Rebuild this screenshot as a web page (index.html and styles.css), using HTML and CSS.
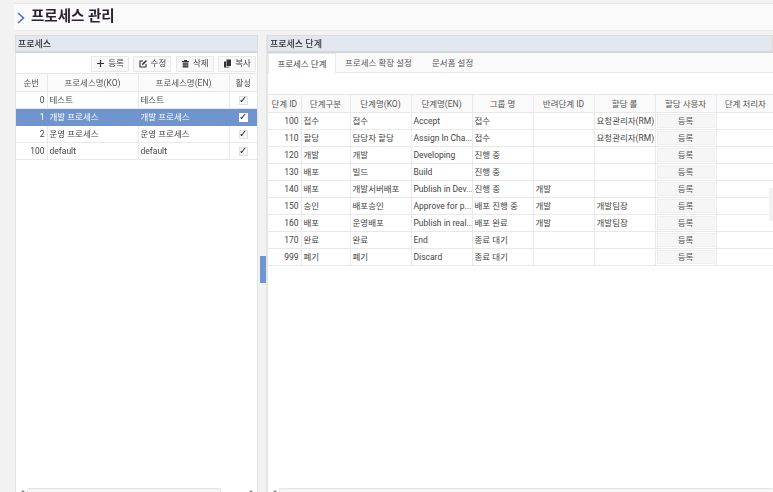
FILE: index.html
```html
<!DOCTYPE html>
<html lang="ko">
<head>
<meta charset="utf-8">
<title>프로세스 관리</title>
<link rel="stylesheet" href="styles.css">
</head>
<body>
<div class="page">
  <header class="title-bar">
    <svg class="chevron" width="8" height="12" viewBox="0 0 8 12"><path d="M1 1l5.500 5L1 11" fill="none" stroke="#4f63d8" stroke-width="1.500"/></svg>
    <h1>프로세스 관리</h1>
  </header>
  <main class="content">
    <section class="panel left">
      <div class="panel-head">프로세스</div>
      <div class="panel-body">
        <div class="toolbar">
          <button class="tool"><svg width="9" height="9" viewBox="0 0 9 9"><path d="M4.500 1v7M1 4.500h7" stroke="#333" stroke-width="1.200"/></svg>등록</button>
          <button class="tool"><svg width="9" height="9" viewBox="0 0 9 9"><path d="M7 5v3H1V2h3" fill="none" stroke="#333" stroke-width="1.100"/><path d="M3 6l.3-1.600L7 1l1 1-3.600 3.700z" fill="#333"/></svg>수정</button>
          <button class="tool"><svg width="9" height="9" viewBox="0 0 9 9"><path d="M1 2h7v1H1zM3 1h3v1H3zM1.700 3.500h5.600V8.500H1.700z" fill="#333"/><path d="M1.700 5h5.600M1.700 6.700h5.600" stroke="#ddd" stroke-width=".5"/></svg>삭제</button>
          <button class="tool"><svg width="9" height="9" viewBox="0 0 9 9"><path d="M3.500 .5H8v6.500H3.500z" fill="#333"/><path d="M1 2.500h2v5.200h3.500v.8H1z" fill="#333"/></svg>복사</button>
        </div>
        <table class="grid grid-left">
          <colgroup><col class="c-no"><col class="c-name"><col class="c-name"><col class="c-on"></colgroup>
          <thead><tr><th>순번</th><th>프로세스명(KO)</th><th>프로세스명(EN)</th><th>활성</th></tr></thead>
          <tbody>
            <tr><td class="num">0</td><td>테스트</td><td>테스트</td><td class="chk"><span class="box">✓</span></td></tr>
            <tr class="selected"><td class="num">1</td><td>개발 프로세스</td><td>개발 프로세스</td><td class="chk"><span class="box">✓</span></td></tr>
            <tr><td class="num">2</td><td>운영 프로세스</td><td>운영 프로세스</td><td class="chk"><span class="box">✓</span></td></tr>
            <tr><td class="num">100</td><td>default</td><td>default</td><td class="chk"><span class="box">✓</span></td></tr>
          </tbody>
        </table>
        <div class="hscroll"><span class="arrow arrow-l"></span><span class="thumb thumb-left"></span><span class="arrow arrow-r"></span></div>
      </div>
    </section>
    <div class="splitter"><span class="handle"></span></div>
    <section class="panel right">
      <div class="panel-head">프로세스 단계</div>
      <div class="panel-body">
        <nav class="tabs">
          <span class="tab active">프로세스 단계</span>
          <span class="tab">프로세스 확장 설정</span>
          <span class="tab">문서폼 설정</span>
        </nav>
        <div class="spacer"></div>
        <table class="grid grid-right">
          <colgroup><col class="s-id"><col class="s-kind"><col class="s-w"><col class="s-w"><col class="s-w"><col class="s-w"><col class="s-w"><col class="s-w"><col class="s-last"></colgroup>
          <thead><tr><th>단계 ID</th><th>단계구분</th><th>단계명(KO)</th><th>단계명(EN)</th><th>그룹 명</th><th>반려단계 ID</th><th>할당 롤</th><th>할당 사용자</th><th>단계 처리자</th></tr></thead>
          <tbody>
            <tr><td class="num">100</td><td>접수</td><td>접수</td><td>Accept</td><td>접수</td><td></td><td>요청관리자(RM)</td><td class="act"><button>등록</button></td><td></td></tr>
            <tr><td class="num">110</td><td>할당</td><td>담당자 할당</td><td>Assign In Cha...</td><td>접수</td><td></td><td>요청관리자(RM)</td><td class="act"><button>등록</button></td><td></td></tr>
            <tr><td class="num">120</td><td>개발</td><td>개발</td><td>Developing</td><td>진행 중</td><td></td><td></td><td class="act"><button>등록</button></td><td></td></tr>
            <tr><td class="num">130</td><td>배포</td><td>빌드</td><td>Build</td><td>진행 중</td><td></td><td></td><td class="act"><button>등록</button></td><td></td></tr>
            <tr><td class="num">140</td><td>배포</td><td>개발서버배포</td><td>Publish in Dev...</td><td>진행 중</td><td>개발</td><td></td><td class="act"><button>등록</button></td><td></td></tr>
            <tr><td class="num">150</td><td>승인</td><td>배포승인</td><td>Approve for p...</td><td>배포 진행 중</td><td>개발</td><td>개발팀장</td><td class="act"><button>등록</button></td><td></td></tr>
            <tr><td class="num">160</td><td>배포</td><td>운영배포</td><td>Publish in real...</td><td>배포 완료</td><td>개발</td><td>개발팀장</td><td class="act"><button>등록</button></td><td></td></tr>
            <tr><td class="num">170</td><td>완료</td><td>완료</td><td>End</td><td>종료 대기</td><td></td><td></td><td class="act"><button>등록</button></td><td></td></tr>
            <tr><td class="num">999</td><td>폐기</td><td>폐기</td><td>Discard</td><td>종료 대기</td><td></td><td></td><td class="act"><button>등록</button></td><td></td></tr>
          </tbody>
        </table>
        <div class="hscroll"><span class="arrow arrow-l"></span><span class="thumb thumb-right"></span></div>
        <span class="float-tab"></span>
      </div>
    </section>
  </main>
</div>
</body>
</html>
```

FILE: styles.css
```css
* { box-sizing: border-box; }
html, body { margin: 0; height: 100%; overflow: hidden; background: #f2f2f2; }
body { font: 8.5px/1 Roboto, "Noto Sans CJK KR", "Noto Sans", sans-serif; color: #444; }
.page { height: 492px; padding: 3px 0 0 14px; display: flex; flex-direction: column; filter: blur(.3px); }
.title-bar { height: 28px; flex: none; display: flex; align-items: center; gap: 6px; padding: 1px 0 0 3px; background: #fafafa; border-top: 1px solid #e6e6e6; border-bottom: 1px solid #e8e8e8; }
.title-bar h1 { margin: 0; font-size: 14.500px; font-weight: 700; color: #2b2230; }
.chevron { flex: none; }
.content { flex: 1; min-height: 0; display: flex; padding: 4px 0 0 1px; }
.panel { display: flex; flex-direction: column; min-width: 0; }
.left { width: 243px; flex: none; }
.right { flex: 1; }
.panel-head { height: 18px; flex: none; display: flex; align-items: center; padding: 1px 0 0 2px; font-weight: 500; font-size: 9px; color: #333; background: #e3e7ef; border: 1px solid #dcdcdc; border-bottom: 2px solid #d4d6da; }
.panel-body { flex: 1; min-height: 0; position: relative; display: flex; flex-direction: column; background: #fff; border-left: 1px solid #e4e4e4; border-right: 1px solid #e4e4e4; }
.right .panel-body { border-right: 0; }
.toolbar { height: 20px; flex: none; display: flex; justify-content: flex-end; align-items: center; gap: 4.300px; padding: 1px 1px 0 0; }
.tool { height: 16px; width: 38px; display: flex; align-items: center; justify-content: center; gap: 3px; padding: 0; font: inherit; color: #444; background: #f8f8f8; border: 1px solid #e8e8e8; border-radius: 1px; }
.grid { table-layout: fixed; border-collapse: collapse; flex: none; }
.grid-left { width: 241px; }
.grid-right { width: 506px; }
.c-no { width: 31px; } .c-name { width: 91px; } .c-on { width: 28px; }
.s-id { width: 33px; } .s-kind { width: 49px; } .s-w { width: 61px; } .s-last { width: 58px; }
.grid th, .grid td { height: 17px; padding: 1px 2px 0; overflow: hidden; white-space: nowrap; border: 1px solid #e9e9e9; }
.grid th { height: 18px; font-weight: 400; color: #555; background: #fafafa; text-align: center; }
.grid td:first-child, .grid th:first-child { border-left: 0; }
.grid td:last-child, .grid th:last-child { border-right: 0; }
.grid .num { text-align: right; }
.grid .selected td { background: #7094cd; color: #fff; border-color: #7094cd; }
.chk { text-align: center; padding: 0 !important; }
.box { display: inline-flex; width: 9px; height: 9px; align-items: center; justify-content: center; background: #f6f6f6; border: 1px solid #e2e2e2; color: #222; font: 10px/1 "DejaVu Sans", sans-serif; vertical-align: middle; }
.selected .box { background: #fff; border-color: #fff; color: #222; }
.tabs { height: 20px; flex: none; display: flex; background: #fafafa; border-bottom: 1px solid #eaeaea; }
.tab { display: flex; align-items: center; padding: 1px 9px 0; color: #555; height: 20px; }
.tab.active { width: 68px; background: #fff; border: 1px solid #eaeaea; border-bottom: 0; color: #444; justify-content: center; padding: 1px 0 0; }
.tab:nth-child(2) { width: 87px; }
.spacer { height: 21px; flex: none; }
.act { padding: 0 1px !important; }
.act button { display: block; width: 100%; height: 14px; padding: 0; font: inherit; color: #555; background: #f6f6f6; border: 1px solid #eeeeee; }
.hscroll { margin-top: auto; height: 4px; flex: none; position: relative; overflow: hidden; background: #fff; }
.thumb { position: absolute; top: 0; height: 8px; background: #f6f6f6; border: 1px solid #e4e4e4; border-radius: 2px; }
.thumb-left { left: 11px; width: 194px; }
.thumb-right { left: 11px; right: 0; border-right: 0; }
.arrow { position: absolute; top: 0; width: 0; height: 0; border: 2px solid transparent; border-bottom-color: #888; }
.arrow-l { left: 5px; }
.arrow-r { right: 4px; }
.splitter { width: 9px; flex: none; position: relative; background: #f2f2f2; border-right: 1px solid #e4e4e4; }
.handle { position: absolute; left: 2px; top: 221px; width: 6px; height: 27px; background: #7094cd; }
.float-tab { position: absolute; right: 0; top: 135px; width: 4px; height: 33px; background: #f2f2f2; }
```
